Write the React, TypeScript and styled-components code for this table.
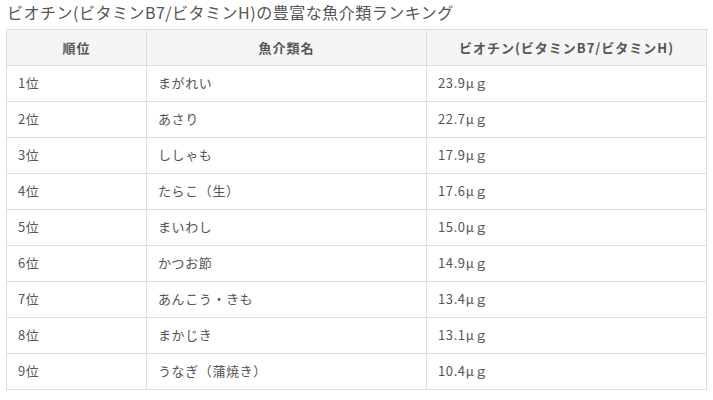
import React from 'react';
import styled, { createGlobalStyle } from 'styled-components';

const GlobalStyle = createGlobalStyle`
    body {
        margin: 0;
        background: #fff;
        font-family: "Noto Sans CJK JP", "Noto Sans", sans-serif;
        color: #555;
    }
`;

const Wrapper = styled.div`
    padding: 0 6px;
`;

const Caption = styled.div`
    height: 29px;
    font-size: 16px;
    line-height: 24px;
    letter-spacing: 0.5px;
    color: #555;
    padding-left: 1px;
`;

const Table = styled.table`
    width: 701px;
    border-collapse: collapse;
    table-layout: fixed;
    font-size: 13px;
    color: #555;
`;

const HeadCell = styled.th`
    box-sizing: border-box;
    height: 36px;
    padding: 0 11px 1px;
    background: #f5f5f5;
    border: 1px solid #ddd;
    font-weight: bold;
    text-align: center;
    letter-spacing: 1px;
`;

const Cell = styled.td`
    box-sizing: border-box;
    height: 36px;
    padding: 0 11px 3px;
    border: 1px solid #ddd;
    letter-spacing: 0.6px;
`;

const rows: [string, string, string][] = [
    ['1位', 'まがれい', '23.9μｇ'],
    ['2位', 'あさり', '22.7μｇ'],
    ['3位', 'ししゃも', '17.9μｇ'],
    ['4位', 'たらこ（生）', '17.6μｇ'],
    ['5位', 'まいわし', '15.0μｇ'],
    ['6位', 'かつお節', '14.9μｇ'],
    ['7位', 'あんこう・きも', '13.4μｇ'],
    ['8位', 'まかじき', '13.1μｇ'],
    ['9位', 'うなぎ（蒲焼き）', '10.4μｇ'],
];

const App = (): React.ReactElement => (
    <>
        <GlobalStyle />
        <Wrapper>
            <Caption>ビオチン(ビタミンB7/ビタミンH)の豊富な魚介類ランキング</Caption>
            <Table>
                <colgroup>
                    <col style={{ width: '20%' }} />
                    <col style={{ width: '40%' }} />
                    <col style={{ width: '40%' }} />
                </colgroup>
                <thead>
                    <tr>
                        <HeadCell>順位</HeadCell>
                        <HeadCell>魚介類名</HeadCell>
                        <HeadCell>ビオチン(ビタミンB7/ビタミンH)</HeadCell>
                    </tr>
                </thead>
                <tbody>
                    {rows.map(([rank, name, amount]) => (
                        <tr key={rank}>
                            <Cell>{rank}</Cell>
                            <Cell>{name}</Cell>
                            <Cell>{amount}</Cell>
                        </tr>
                    ))}
                </tbody>
            </Table>
        </Wrapper>
    </>
);

export default App;
